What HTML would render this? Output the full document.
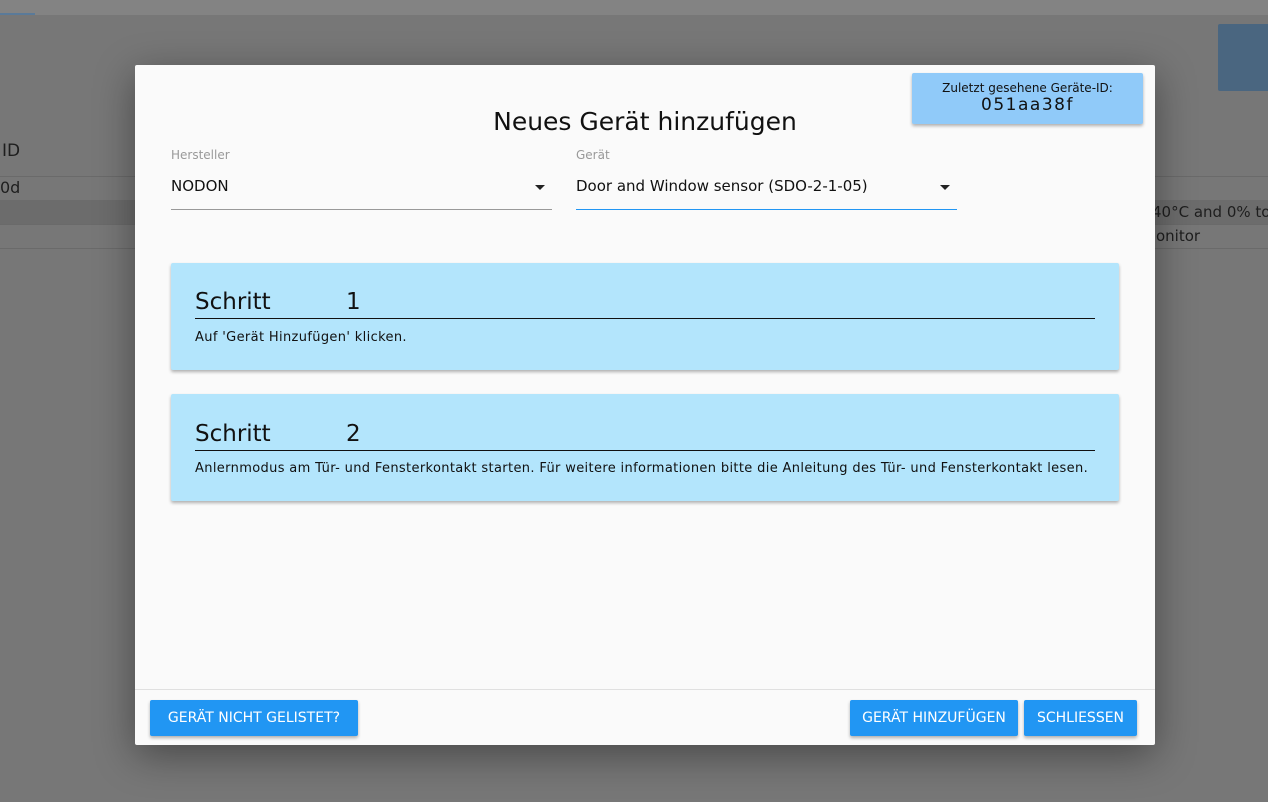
<!DOCTYPE html>
<html><head><meta charset="utf-8"><style>
*{box-sizing:border-box;margin:0;padding:0}
body{width:1268px;height:802px;overflow:hidden;background:#777;font-family:"DejaVu Sans","Liberation Sans",sans-serif;position:relative}
.top{position:absolute;left:0;top:0;width:1268px;height:15px;background:#838383}
.tab{position:absolute;left:0;top:13px;width:35px;height:2px;background:#5a7a99}
.bgtxt{position:absolute;color:#1e1e1e;font-size:15px;white-space:nowrap}
.line{position:absolute;height:1px;background:#6a6a6a}
.bluebox{position:absolute;left:1218px;top:24px;width:60px;height:67px;background:#4a6680;border-radius:2px}
.dlg{position:absolute;left:135px;top:65px;width:1020px;height:680px;background:#fafafa;border-radius:2px;box-shadow:0 10px 40px rgba(0,0,0,.4)}
.idbox{position:absolute;left:777px;top:8px;width:231px;height:51px;background:#90caf9;border-radius:2px;box-shadow:0 2px 3px rgba(0,0,0,.3);text-align:center;color:#111}
.idbox .a{font-size:12px;margin-top:8px}
.idbox .b{font-size:17px;letter-spacing:1.5px;margin-top:0px}
h1{position:absolute;left:0;width:1020px;top:42px;text-align:center;font-weight:normal;font-size:25px;color:#111}
.sel{position:absolute;width:381px;height:63px;border-bottom:1px solid #999}
.sel .l{font-size:12px;color:#999;position:absolute;top:1px}
.sel .v{font-size:15px;color:#111;position:absolute;top:30px}
.sel .ar{position:absolute;right:7px;top:38px;width:0;height:0;border-left:5px solid transparent;border-right:5px solid transparent;border-top:5px solid #222}
.card{position:absolute;left:36px;width:948px;background:#b3e5fc;box-shadow:0 2px 3px rgba(0,0,0,.3);border-radius:2px}
.card .h{position:absolute;left:24px;right:24px;top:24px;height:32px;border-bottom:1px solid #111;font-size:23px;color:#111;line-height:30px}
.card .h span{position:absolute;left:151px}
.card .t{position:absolute;left:24px;top:67px;font-size:13px;color:#111;letter-spacing:0.35px;white-space:nowrap}
.foot{position:absolute;left:0;top:624px;width:1020px;height:1px;background:#e0e0e0}
.btn{position:absolute;top:635px;height:36px;background:#2196f3;color:#fff;font-size:14px;line-height:36px;text-align:center;border-radius:2px;box-shadow:0 2px 3px rgba(0,0,0,.3)}
</style></head><body>
<div class="top"></div><div class="tab"></div>
<div class="bluebox"></div>
<div class="bgtxt" style="left:2px;top:141px;font-size:17px">ID</div>
<div class="line" style="left:0;top:176px;width:1268px"></div>
<div class="bgtxt" style="left:0;top:178px;font-size:16px">0d</div>
<div style="position:absolute;left:0;top:200px;width:1268px;height:24px;background:#6c6c6c"></div>
<div class="line" style="left:0;top:224px;width:1268px"></div>
<div class="line" style="left:0;top:248px;width:1268px"></div>
<div class="bgtxt" style="left:1152px;top:203px">40°C and 0% to</div>
<div class="bgtxt" style="left:1156px;top:227px">onitor</div>
<div class="dlg">
<div class="idbox"><div class="a">Zuletzt gesehene Geräte-ID:</div><div class="b">051aa38f</div></div>
<h1>Neues Gerät hinzufügen</h1>
<div class="sel" style="left:36px;top:82px"><div class="l">Hersteller</div><div class="v">NODON</div><div class="ar"></div></div>
<div class="sel" style="left:441px;top:82px;border-bottom-color:#2196f3"><div class="l">Gerät</div><div class="v">Door and Window sensor (SDO-2-1-05)</div><div class="ar"></div></div>
<div class="card" style="top:198px;height:107px"><div class="h">Schritt<span>1</span></div><div class="t">Auf 'Gerät Hinzufügen' klicken.</div></div>
<div class="card" style="top:329px;height:107px"><div class="h" style="top:25px">Schritt<span>2</span></div><div class="t" style="top:67px">Anlernmodus am Tür- und Fensterkontakt starten. Für weitere informationen bitte die Anleitung des Tür- und Fensterkontakt lesen.</div></div>
<div class="foot"></div>
<div class="btn" style="left:15px;width:208px">GERÄT NICHT GELISTET?</div>
<div class="btn" style="left:715px;width:168px">GERÄT HINZUFÜGEN</div>
<div class="btn" style="left:889px;width:113px">SCHLIESSEN</div>
</div>
</body></html>
